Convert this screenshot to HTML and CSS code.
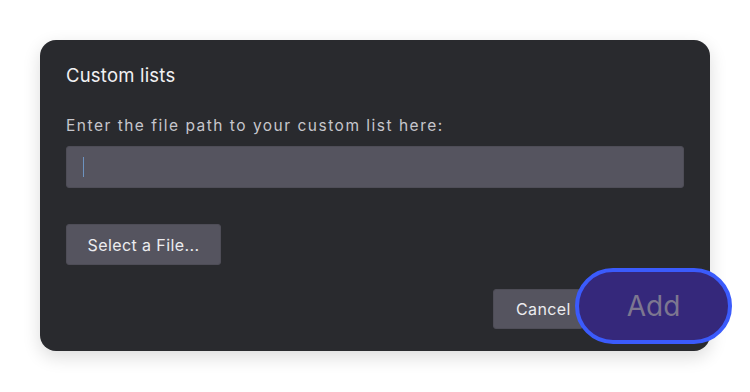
FILE: index.html
```html
<!DOCTYPE html>
<html lang="en">
<head>
    <meta charset="UTF-8">
    <title>Custom lists</title>
    <link rel="stylesheet" href="styles.css">
</head>
<body>

<div class="dialog">
    <h2 class="dialog-title">Custom lists</h2>

    <label for="listPath" class="field-label">Enter the file path to your custom list here:</label>
    <div class="path-input" id="listPath">
        <span class="caret"></span>
    </div>

    <button class="btn btn-select">Select a File...</button>

    <!-- Footer actions -->
    <div class="dialog-footer">
        <button class="btn btn-cancel">Cancel</button>
        <button class="btn-add">Add</button>
    </div>
</div>

</body>
</html>
```

FILE: styles.css
```css
/* Reset */
* {
    box-sizing: border-box;
    margin: 0;
    padding: 0;
}

body {
    font-family: Inter, 'Noto Sans', Arial, sans-serif;
    background: #fff;
    padding: 40px;
}

.dialog {
    width: 670px;
    background: #292a2e;
    border-radius: 16px;
    padding: 24px 26px 22px;
    box-shadow: 0 6px 18px rgba(0, 0, 0, 0.14);
}

.dialog-title {
    font-size: 18.5px;
    font-weight: 400;
    line-height: 22px;
    letter-spacing: 0.2px;
    color: #f1f1f3;
    margin-bottom: 30px;
}

.field-label {
    display: block;
    font-size: 15.5px;
    line-height: 20px;
    letter-spacing: 1.5px;
    color: #c6c6cc;
    margin-bottom: 10px;
}

.path-input {
    height: 42px;
    background: #55545f;
    border: 1px solid #4e4d57;
    border-radius: 3px;
    padding: 10px 16px;
}

.caret {
    display: block;
    width: 1px;
    height: 20px;
    background: #6d93c0;
}

.btn {
    font-family: inherit;
    font-size: 16px;
    letter-spacing: 0.4px;
    color: #ececef;
    background: #55545f;
    border: 1px solid #4e4d57;
    border-radius: 3px;
}

.btn-select {
    display: block;
    width: 155px;
    height: 41px;
    margin-top: 36px;
}

.dialog-footer {
    display: flex;
    justify-content: flex-end;
    align-items: flex-start;
    margin-top: 24px;
}

.btn-cancel {
    width: 90px;
    height: 40px;
    text-align: left;
    padding-left: 22px;
}

.btn-add {
    position: relative;
    width: 157px;
    height: 76px;
    margin: -21px -48px -15px -8px;
    background: #35287b;
    border: 4px solid #3b5bfc;
    border-radius: 38px;
    font-family: inherit;
    font-size: 28px;
    color: #7d7790;
}
```
